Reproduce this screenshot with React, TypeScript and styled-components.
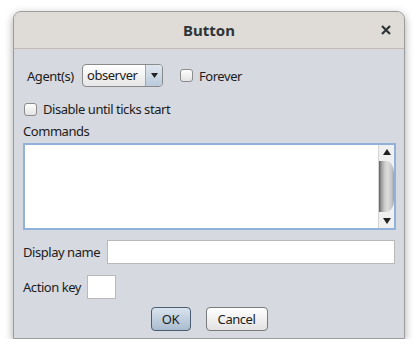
import React from "react";
import styled, { createGlobalStyle } from "styled-components";

const Global = createGlobalStyle`
  html, body { margin: 0; padding: 0; background: #ffffff; }
  body { font-family: "Noto Sans", "DejaVu Sans", sans-serif; font-size: 13px; letter-spacing: -0.45px; color: #1c1c1c; }
`;

const Page = styled.div`
  padding: 11px 0 0 13px;
`;

const Window = styled.div`
  width: 392px;
  height: 328px;
  box-sizing: border-box;
  border: 1px solid #9c9c9c;
  border-radius: 8px 8px 0 0;
  box-shadow: 0 3px 8px rgba(0, 0, 0, 0.35);
  display: flex;
  flex-direction: column;
  overflow: hidden;
  background: #d6d9df;
`;

const TitleBar = styled.div`
  height: 37px;
  flex: none;
  box-sizing: border-box;
  background: #dfdcd8;
  border-bottom: 1px solid #c4bab2;
  display: flex;
  align-items: center;
  justify-content: center;
  position: relative;
`;

const Title = styled.div`
  font-weight: bold;
  font-size: 15px;
  letter-spacing: 0;
  color: #2e3436;
`;

const Close = styled.div`
  position: absolute;
  right: 13px;
  top: 13px;
  width: 10px;
  height: 10px;
  display: flex;
`;

const Body = styled.div`
  flex: 1;
  display: flex;
  flex-direction: column;
  padding: 15px 9px 7px 9px;
`;

const Row = styled.div<{ $indent?: number; $mt?: number; $h?: number }>`
  display: flex;
  align-items: center;
  margin-left: ${(p) => p.$indent ?? 0}px;
  margin-top: ${(p) => p.$mt ?? 0}px;
  height: ${(p) => p.$h ?? 24}px;
`;

const Label = styled.span<{ $w?: number }>`
  white-space: nowrap;
  ${(p) => (p.$w ? `width: ${p.$w}px; flex: none;` : "margin-right: 6px;")}
`;

const Combo = styled.div`
  width: 81px;
  height: 23px;
  box-sizing: border-box;
  border: 1px solid #8a8a8a;
  border-radius: 4px;
  background: linear-gradient(#ffffff, #e6e6e6);
  display: flex;
  overflow: hidden;
`;

const ComboText = styled.div`
  flex: 1;
  padding-left: 4px;
  line-height: 21px;
`;

const ComboButton = styled.div`
  width: 16px;
  border-left: 1px solid #9aa8b8;
  background: linear-gradient(#dfe7f0, #b9cadb);
  display: flex;
  align-items: center;
  justify-content: center;
`;

const Check = styled.div<{ $ml?: number }>`
  width: 13px;
  height: 13px;
  box-sizing: border-box;
  border: 1px solid #8c8c8c;
  border-radius: 3px;
  background: linear-gradient(#fdfdfd, #e4e4e4);
  margin-left: ${(p) => p.$ml ?? 0}px;
  margin-right: 6px;
  flex: none;
`;

const CommandsLabel = styled.div`
  margin-top: 1px;
  height: 18px;
  line-height: 18px;
`;

const TextArea = styled.div`
  margin-top: 3px;
  height: 87px;
  box-sizing: border-box;
  border: 2px solid #8fb1da;
  background: #ffffff;
  display: flex;
  justify-content: flex-end;
  margin-right: -1px;
`;

const ScrollBar = styled.div`
  width: 15px;
  background: #f0f0f0;
  border-left: 1px solid #d4d4d4;
  display: flex;
  flex-direction: column;
  align-items: center;
`;

const ScrollArrow = styled.div`
  height: 14px;
  display: flex;
  align-items: center;
  justify-content: center;
  flex: none;
`;

const Thumb = styled.div`
  flex: 1;
  width: 15px;
  margin: 2px 0;
  border-radius: 0 8px 8px 0 / 0 12px 12px 0;
  background: linear-gradient(90deg, #5e5e5e 0%, #9a9a9a 15%, #d0d0d0 40%, #dcdcdc 60%, #c4c4c4 85%, #a0a0a0 100%);
`;

const Input = styled.div<{ $w?: number }>`
  height: 24px;
  box-sizing: border-box;
  border: 1px solid #b9b9b9;
  background: #ffffff;
  ${(p) => (p.$w ? `width: ${p.$w}px;` : "flex: 1;")}
`;

const Buttons = styled.div`
  display: flex;
  justify-content: center;
  gap: 15px;
  margin-top: 8px;
`;

const Button = styled.div<{ $primary?: boolean; $w: number }>`
  width: ${(p) => p.$w}px;
  height: 24px;
  box-sizing: border-box;
  border-radius: 4px;
  border: 1px solid ${(p) => (p.$primary ? "#4a5d72" : "#7a7a7a")};
  background: ${(p) =>
    p.$primary ? "linear-gradient(#d9e3ee, #a9bccf)" : "linear-gradient(#ffffff, #e2e2e2)"};
  display: flex;
  align-items: center;
  justify-content: center;
`;

const Tri = ({ down }: { down?: boolean }) => (
  <svg width="8" height="6" viewBox="0 0 8 6">
    <polygon points={down ? "0,0 8,0 4,6" : "0,6 8,6 4,0"} fill="#222" />
  </svg>
);

export default function App() {
  return (
    <Page>
      <Global />
      <Window>
        <TitleBar>
          <Title>Button</Title>
          <Close>
            <svg width="10" height="10" viewBox="0 0 10 10">
              <path d="M1 1 L9 9 M9 1 L1 9" stroke="#2e3436" strokeWidth="2.2" />
            </svg>
          </Close>
        </TitleBar>
        <Body>
          <Row $indent={4} $h={23}>
            <Label $w={55}>Agent(s)</Label>
            <Combo>
              <ComboText>observer</ComboText>
              <ComboButton>
                <svg width="7" height="5" viewBox="0 0 7 5">
                  <polygon points="0,0 7,0 3.5,5" fill="#222" />
                </svg>
              </ComboButton>
            </Combo>
            <Check $ml={17} />
            <Label>Forever</Label>
          </Row>
          <Row $indent={1} $mt={10} $h={24}>
            <Check />
            <Label>Disable until ticks start</Label>
          </Row>
          <CommandsLabel>Commands</CommandsLabel>
          <TextArea>
            <ScrollBar>
              <ScrollArrow>
                <Tri />
              </ScrollArrow>
              <Thumb />
              <ScrollArrow>
                <Tri down />
              </ScrollArrow>
            </ScrollBar>
          </TextArea>
          <Row $mt={10}>
            <Label $w={84}>Display name</Label>
            <Input />
          </Row>
          <Row $mt={11}>
            <Label $w={64}>Action key</Label>
            <Input $w={29} />
          </Row>
          <Buttons>
            <Button $primary $w={40}>OK</Button>
            <Button $w={62}>Cancel</Button>
          </Buttons>
        </Body>
      </Window>
    </Page>
  );
}
